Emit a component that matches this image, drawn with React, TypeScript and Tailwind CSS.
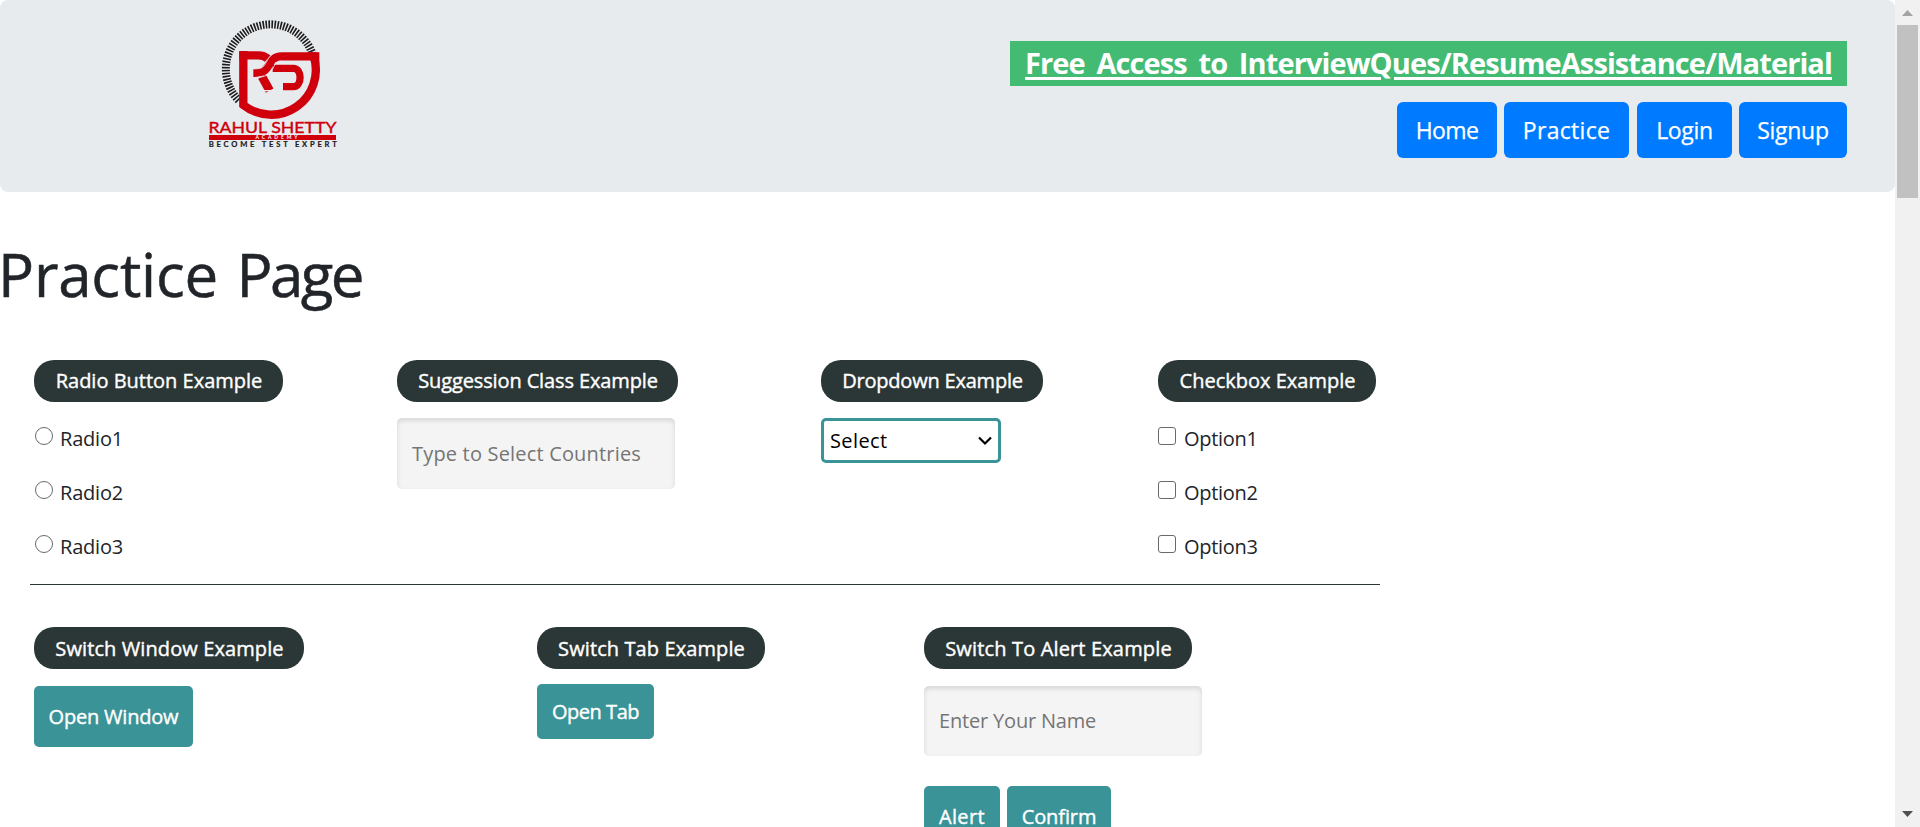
import React from "react";

function Logo() {
  return (
    <svg className="block h-48 w-[170px]" viewBox="0 0 170 192" aria-label="Rahul Shetty Academy">
      <g transform="scale(0.33333)" fill="none">
        <path
          d="M146 301 A134 134 0 1 1 367 160"
          stroke="#1c1c1c"
          strokeWidth="24"
          strokeDasharray="4.8 4"
        />
        <g stroke="#cf000c">
          <path d="M160 153 V315 A134 134 0 0 0 371 169 H275" strokeWidth="25" />
          <path d="M360 157 H388 V190 H372 Z" fill="#cf000c" stroke="none" />
          <path d="M148 166 H205 Q222 166 233 176" strokeWidth="25" />
          <path d="M276 169 C250 169 243 184 235 198 C226 214 216 219 190 219" strokeWidth="24" />
          <path d="M216 230 L239 272" strokeWidth="26" />
          <path d="M248 205 H310 C337 205 337 260 310 260 H279" strokeWidth="22" />
        </g>
        <path d="M262 155 C238 164 233 180 226 193 C219 204 212 207 190 207" stroke="#e8ebee" strokeWidth="2" />
        <path d="M258 186 C246 216 234 231 204 232" stroke="#e8ebee" strokeWidth="2.5" />
        <path d="M205 272 H265" stroke="#e8ebee" strokeWidth="4" />
      </g>
      <text x="18.5" y="133" textLength="128" lengthAdjust="spacingAndGlyphs" fill="#cf000c" stroke="#cf000c" strokeWidth="0.4" className="font-['Lato',sans-serif] text-[16px]">
        RAHUL SHETTY
      </text>
      <rect x="19" y="135" width="127" height="5" fill="#cf000c" />
      <text x="65.5" y="139.4" textLength="42" fill="#fff" className="font-['Lato',sans-serif] text-[5px] font-bold">
        ACADEMY
      </text>
      <text x="18.7" y="147" textLength="128" fill="#1c1c1c" stroke="#1c1c1c" strokeWidth="0.2" className="font-['Lato',sans-serif] text-[7.6px] font-bold">
        BECOME TEST EXPERT
      </text>
    </svg>
  );
}

function Legend({ text, size }: { text: string; size: string }) {
  return (
    <h2
      className={`flex h-[42px] items-center justify-center rounded-[20px] bg-[#2b3736] pl-px text-[20px] whitespace-nowrap text-white [-webkit-text-stroke:0.4px_white] ${size}`}
    >
      {text}
    </h2>
  );
}

function Radio({ label }: { label: string }) {
  return (
    <label className="flex h-[54px] items-center pl-px">
      <span className="mb-1 size-[18px] rounded-full border-[1.4px] border-[#6a6a6a] bg-white" />
      <span className="mt-0.5 ml-[7px] tracking-[-0.2px]">{label}</span>
    </label>
  );
}

function Checkbox({ label }: { label: string }) {
  return (
    <label className="flex h-[54px] items-center">
      <span className="mb-1 size-[18px] rounded-[3px] border-[1.4px] border-[#6a6a6a] bg-white" />
      <span className="mt-0.5 ml-2 tracking-[-0.3px]">{label}</span>
    </label>
  );
}

function Field({ placeholder, look }: { placeholder: string; look: string }) {
  return (
    <div
      className={`flex w-[278px] items-center rounded-[5px] bg-[#f4f4f4] pl-[15px] whitespace-nowrap text-[#757575] shadow-[inset_0_2.5px_5px_rgba(0,0,0,0.12)] ${look}`}
    >
      {placeholder}
    </div>
  );
}

function NavButton({ text, look }: { text: string; look: string }) {
  return (
    <a
      className={`flex h-14 items-center justify-center rounded-[6px] bg-[#007bff] text-[23px] text-white [-webkit-text-stroke:0.25px_white] ${look}`}
    >
      {text}
    </a>
  );
}

function TealButton({ text, look }: { text: string; look: string }) {
  return (
    <button
      className={`flex shrink-0 items-center justify-center rounded-[5px] bg-[#399397] text-[20px] whitespace-nowrap text-white [-webkit-text-stroke:0.4px_white] ${look}`}
    >
      {text}
    </button>
  );
}

function Scrollbar() {
  return (
    <div className="flex w-[25px] shrink-0 flex-col items-center justify-between bg-[#f1f1f1]">
      <div className="flex flex-col items-center">
        <svg className="h-[25px] w-[25px]" viewBox="0 0 25 25">
          <path d="M7 16 L12.5 10 L18 16 Z" fill="#a3a3a3" />
        </svg>
        <div className="h-[173px] w-[21px] bg-[#c1c1c1]" />
      </div>
      <svg className="h-[25px] w-[25px]" viewBox="0 0 25 25">
        <path d="M7 9 L12.5 15 L18 9 Z" fill="#505050" />
      </svg>
    </div>
  );
}

export default function App() {
  return (
    <div className="flex h-[827px] w-full overflow-hidden bg-white font-['Open_Sans',sans-serif] text-[20px] text-[#212529]">
      <main className="min-w-0 flex-1">
        <header className="flex h-48 justify-between rounded-[8px] bg-[#e8ebee] pr-12 pl-[190px]">
          <Logo />
          <div className="flex flex-col items-end pt-[41px]">
            <a className="flex h-[45px] w-[837px] items-center justify-center bg-[#43bb73] pb-px text-[29px] font-bold tracking-[-0.9px] [word-spacing:5px] whitespace-nowrap text-white">
              <span className="underline decoration-[3px] underline-offset-[3px]">
                Free Access to InterviewQues/ResumeAssistance/Material
              </span>
            </a>
            <nav className="mt-4 flex">
              <NavButton text="Home" look="w-[100px] tracking-[-0.6px]" />
              <NavButton text="Practice" look="ml-[7px] w-[125px] tracking-[0.3px]" />
              <NavButton text="Login" look="ml-2 w-[95px] tracking-[-0.3px]" />
              <NavButton text="Signup" look="ml-[7px] w-[108px] tracking-[-0.3px]" />
            </nav>
          </div>
        </header>

        <h1 className="mt-[46px] h-[72px] text-[60px] leading-[72px] tracking-[-0.2px] -indent-[2px] [word-spacing:3px] [-webkit-text-stroke:0.5px_#212529]">
          Practice <span className="tracking-[-2.6px]">Page</span>
        </h1>

        <section className="mt-[50px] ml-[30px] flex h-[225px] w-[1350px] border-b border-[#2b3736] pl-1">
          <div className="w-[363px]">
            <Legend text="Radio Button Example" size="w-[249px]" />
            <div className="mt-[9px]">
              <Radio label="Radio1" />
              <Radio label="Radio2" />
              <Radio label="Radio3" />
            </div>
          </div>
          <div className="w-[424px]">
            <Legend text="Suggession Class Example" size="w-[281px] tracking-[-0.12px]" />
            <Field placeholder="Type to Select Countries" look="mt-4 h-[71px] tracking-[0.18px]" />
          </div>
          <div className="w-[337px]">
            <Legend text="Dropdown Example" size="w-[222px] tracking-[-0.2px]" />
            <div className="mt-4 flex h-[45px] w-[180px] items-center justify-between rounded-[5px] border-[3px] border-[#399397] bg-white pr-[5px] pl-1.5 tracking-[0.4px] text-black">
              <span>Select</span>
              <svg className="h-2.5 w-4" viewBox="0 0 16 10" fill="none" stroke="#000" strokeWidth="2.2">
                <path d="M2 1.5 L8 7.5 L14 1.5" />
              </svg>
            </div>
          </div>
          <div>
            <Legend text="Checkbox Example" size="w-[218px]" />
            <div className="mt-[9px]">
              <Checkbox label="Option1" />
              <Checkbox label="Option2" />
              <Checkbox label="Option3" />
            </div>
          </div>
        </section>

        <section className="mt-[42px] ml-[34px] flex">
          <div className="w-[503px]">
            <Legend text="Switch Window Example" size="w-[270px] pt-0.5 tracking-[0.1px]" />
            <TealButton text="Open Window" look="mt-[17px] h-[61px] w-[159px] tracking-[-0.2px]" />
          </div>
          <div className="w-[387px]">
            <Legend text="Switch Tab Example" size="w-[228px] pt-0.5 tracking-[0.1px]" />
            <TealButton text="Open Tab" look="mt-[15px] h-[55px] w-[117px] tracking-[-0.45px]" />
          </div>
          <div>
            <Legend text="Switch To Alert Example" size="w-[268px] pt-0.5 tracking-[0.15px]" />
            <Field placeholder="Enter Your Name" look="mt-[17px] h-[70px] pb-px tracking-[-0.18px]" />
            <div className="mt-[30px] flex gap-[7px]">
              <TealButton text="Alert" look="h-[61px] w-[76px] tracking-[0.4px]" />
              <TealButton text="Confirm" look="h-[61px] w-[104px] tracking-[-0.1px]" />
            </div>
          </div>
        </section>
      </main>
      <Scrollbar />
    </div>
  );
}
